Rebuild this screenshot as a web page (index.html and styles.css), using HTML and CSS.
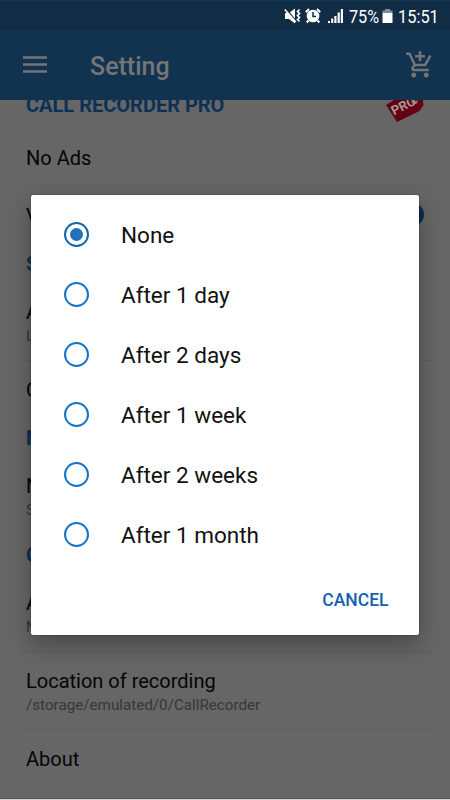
FILE: index.html
```html
<!DOCTYPE html>
<html lang="en">
<head>
<meta charset="utf-8">
<title>Setting</title>
<link rel="stylesheet" href="styles.css">
</head>
<body>
<div class="screen">
  <header class="top">
    <div class="status">
      <svg class="mute" width="17" height="16" viewBox="0 0 17 16"><path d="M1 5h4l6-4.500v15L5 11H1z" fill="#fff"/><path d="M2.200 1l10 12" stroke="#102d45" stroke-width="1.200"/><path d="M.8 1.500l11 12.500" stroke="#fff" stroke-width="1.600"/><path d="M15.500 1.500l-2 2 2 2-2 2 2 2-2 2 2 2" stroke="#fff" stroke-width="1.700" fill="none"/></svg>
      <svg class="alarm" width="16" height="16" viewBox="0 0 16 16"><circle cx="8" cy="8" r="6.300" fill="#fff"/><path d="M.8 4.200L4 1M15.200 4.200L12 1M3.500 12.500l-1.800 2M12.500 12.500l1.800 2" stroke="#fff" stroke-width="2"/><path d="M8 4v4.500h3" stroke="#102d45" stroke-width="1.500" fill="none"/></svg>
      <svg class="signal" width="16" height="16" viewBox="0 0 16 16"><path d="M0 15v-2h2v2zM3.200 15v-4.500h2V15zM6.300 15V8h2.200v7zM9.600 15V4.500h2.200V15zM12.800 15V1H15v14z" fill="#fff"/></svg>
      <span class="pct">75%</span>
      <svg class="batt" width="11" height="16" viewBox="0 0 11 16"><path d="M3 1h5v1.500h2.500V5H.5V2.500H3z" fill="#7f909d"/><path d="M.5 5h10v10H.5z" fill="#fff"/></svg>
      <span class="clock">15:51</span>
    </div>
    <div class="appbar">
      <svg class="menu" width="24" height="17" viewBox="0 0 24 17"><path d="M0 1.500h24M0 8.500h24M0 15.500h24" stroke="#737577" stroke-width="2.400"/></svg>
      <h1>Setting</h1>
      <svg class="cart" width="30" height="30" viewBox="0 0 24 24" fill="#737577"><path d="M11 9h2V6h3V4h-3V1h-2v3H8v2h3v3zm-4 9c-1.100 0-1.990.9-1.990 2S5.900 22 7 22s2-.9 2-2-.9-2-2-2zm10 0c-1.100 0-1.990.9-1.990 2s.89 2 1.990 2 2-.9 2-2-.9-2-2-2zm-9.830-3.250l.03-.12.9-1.630h7.450c.75 0 1.410-.41 1.750-1.030l3.860-7.010L19.420 4h-.01l-1.100 2-2.760 5H8.530l-.13-.27L6.160 6l-.95-2-.94-2H1v2h2l3.600 7.590-1.350 2.450c-.16.28-.25.61-.25.96 0 1.100.9 2 2 2h12v-2H7.420c-.13 0-.25-.11-.25-.25z"/></svg>
    </div>
  </header>
  <main class="list">
    <div class="head first"><h2>CALL RECORDER PRO</h2>
      <svg class="tag" width="40" height="44" viewBox="0 0 40 44"><path d="M1 24L27 8l10 5 1.500 11-4 6L12 41z" fill="#650010"/><circle cx="29.500" cy="20" r="3.200" fill="#777"/><circle cx="30.500" cy="18.500" r="1.800" fill="#650010"/><text transform="translate(9 34.500) rotate(-27)">PRO</text></svg>
    </div>
    <div class="row short line">No Ads</div>
    <div class="row tall"><span>V</span><i class="switch"></i></div>
    <div class="head"><h2>S</h2></div>
    <div class="row two line"><span>A</span><small>L</small></div>
    <div class="row mid">C</div>
    <div class="head"><h2>N</h2></div>
    <div class="row two plus"><span>N</span><small>S</small></div>
    <div class="head"><h2>G</h2></div>
    <div class="row two line"><span>A</span><small>N</small></div>
    <div class="row two line"><span>Location of recording</span><small>/storage/emulated/0/CallRecorder</small></div>
    <div class="row mid">About</div>
  </main>
  <div class="dialog">
    <label class="option on"><i></i>None</label>
    <label class="option"><i></i>After 1 day</label>
    <label class="option"><i></i>After 2 days</label>
    <label class="option"><i></i>After 1 week</label>
    <label class="option"><i></i>After 2 weeks</label>
    <label class="option"><i></i>After 1 month</label>
    <div class="actions"><button>CANCEL</button></div>
  </div>
</div>
</body>
</html>
```
FILE: styles.css
```css
* { box-sizing: border-box; }
body { margin: 0; height: 800px; overflow: hidden; background: #d0d0d0; font-family: Roboto, sans-serif; }
.screen { position: relative; height: 799px; overflow: hidden; background: #666; border-bottom: 1px solid #555; }
.top { position: relative; z-index: 1; color: #fff; }
.status { display: flex; align-items: center; height: 30px; padding: 1px 11px 0 284px; background: #102d45; border-top: 1px solid #15364f; font-size: 18px; }
.alarm { margin-left: 4px; }
.signal { margin-left: 7px; }
.pct { margin-left: 5px; width: 29px; }
.batt { margin-left: 4px; }
.clock { margin-left: 5px; }
.pct, .clock { white-space: nowrap; transform-origin: left; }
.pct { transform: scaleX(.9); }
.clock { transform: scaleX(.91); }
.status svg { flex: none; }
.appbar { display: flex; align-items: center; height: 70px; padding: 0 15px 0 23px; background: #123350; color: #737577; }
.menu { margin-top: -1px; }
.appbar h1 { flex: 1; margin: 3px 0 0 43px; font-size: 25px; font-weight: 500; line-height: 30px; }
.list { margin-top: -20px; color: #050505; }
.head { display: flex; align-items: center; justify-content: space-between; height: 38px; padding: 0 25px 0 26px; color: #0b3158; }
.head h2 { margin: 0; font-size: 20px; font-weight: 700; }
.first { height: 50px; }
.tag { margin-top: -4px; }
.tag text { fill: #a5979a; font-size: 13px; font-weight: 700; }
.row { display: flex; align-items: center; justify-content: space-between; margin: 0 18px 0 20px; padding: 0 6px; font-size: 20px; }
.line { border-bottom: 1px solid #5f5f5f; }
.short { height: 56px; }
.tall { height: 59px; }
.mid { height: 58px; }
.two { flex-direction: column; align-items: flex-start; justify-content: flex-start; height: 78px; padding-top: 17px; line-height: 24px; }
.plus { height: 79px; }
.row small { color: #373737; font-size: 15.200px; }
.switch { width: 23px; height: 23px; margin: 0 2px 2px 0; border-radius: 50%; background: #0b2c50; }
.dialog { position: absolute; z-index: 2; left: 31px; top: 195px; width: 387.500px; height: 439.500px; padding-top: 10px; border-radius: 2px; background: #fff; box-shadow: 0 10px 24px rgba(0,0,0,.3), 0 0 2px rgba(0,0,0,.4); }
.option { display: flex; align-items: center; height: 60px; padding-left: 33px; color: #111; font-size: 22.500px; }
.option i { display: grid; place-items: center; width: 25px; height: 25px; margin: -1px 32px 0 0; border: 2px solid #1474c8; border-radius: 50%; }
.on i { border-color: #0f65b0; }
.on i::before { content: ""; width: 13px; height: 13px; border-radius: 50%; background: #2272b9; }
.actions { display: flex; justify-content: flex-end; padding: 20px 30px 0 0; }
.actions button { padding: 0; border: 0; background: none; color: #1262b0; font: 500 17.500px/30px Roboto, sans-serif; }
```
